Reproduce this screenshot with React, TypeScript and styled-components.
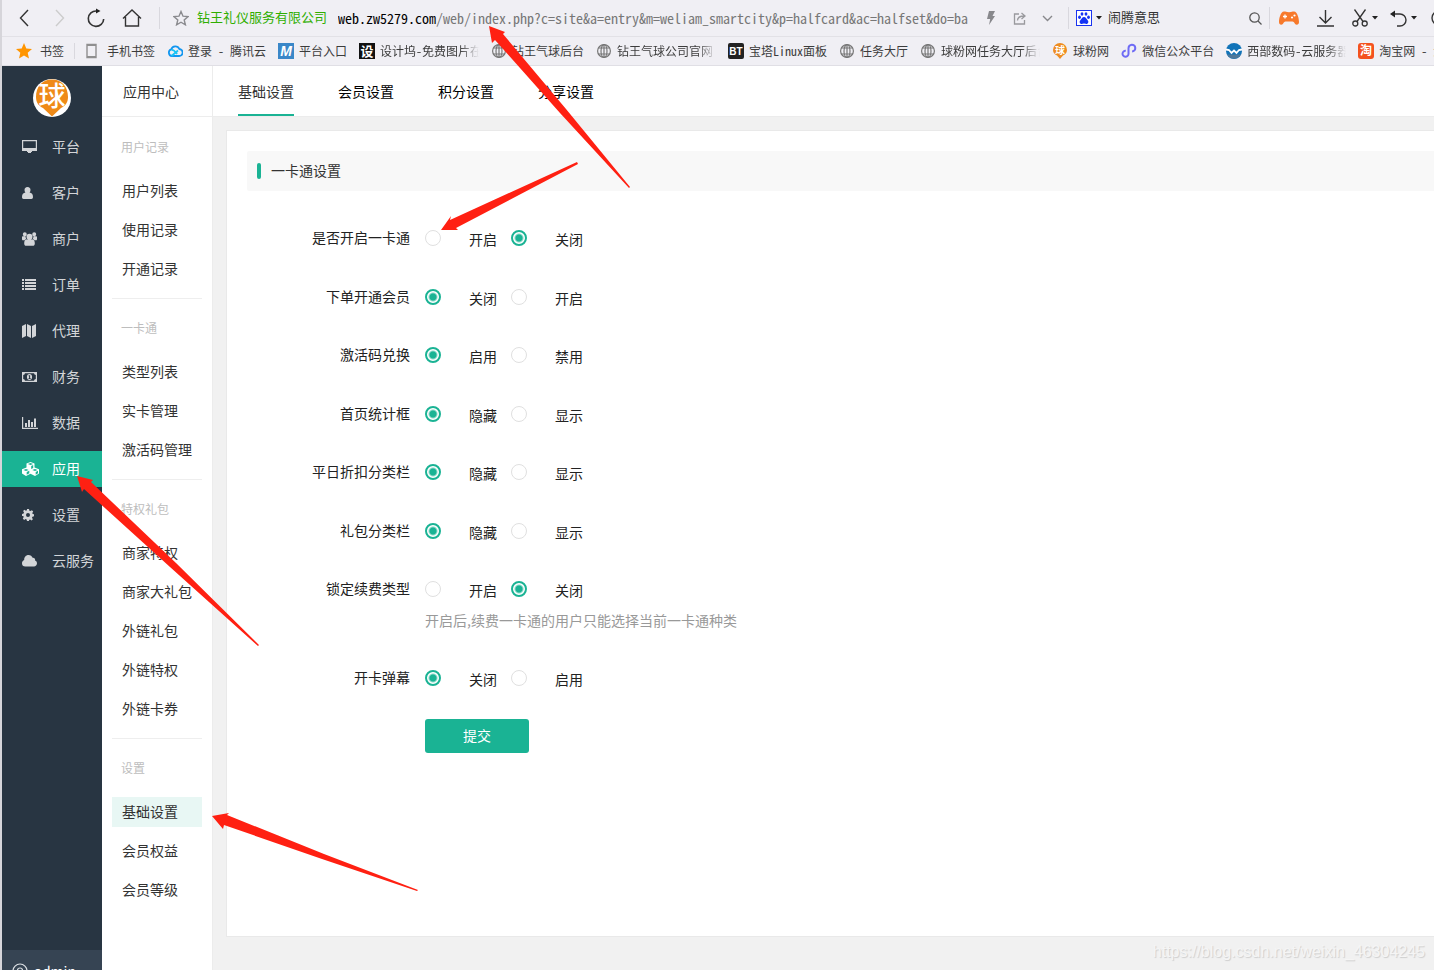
import React from "react";
import styled, { createGlobalStyle, css } from "styled-components";

const green = "#1ab394";
const cjk = '"Noto Sans CJK SC", "Liberation Sans", sans-serif';

const GlobalStyle = createGlobalStyle`
  * { box-sizing: border-box; }
  body { margin: 0; font-family: ${cjk}; font-size: 14px; line-height: 20px; color: #333; }
  button, input { font-family: inherit; font-size: inherit; }
  button { border: 0; padding: 0; background: none; cursor: pointer; color: inherit; }
  a { color: inherit; text-decoration: none; }
  svg { display: block; flex: none; }
  p, h1, h2, h3, ul { margin: 0; padding: 0; font-weight: 400; font-size: inherit; }
  ul { list-style: none; }
`;

const Page = styled.div`
  position: relative;
  display: flex;
  flex-direction: column;
  height: 100vh;
  overflow: hidden;
  border-left: 2px solid #d6d5da;
  background: #f1f1f1;
`;

/* ---------- browser chrome ---------- */

const Chrome = styled.header`
  flex: none;
  background: #f0eff4;
  white-space: nowrap;
  font-feature-settings: "hwid";
`;

const Toolbar = styled.div`
  display: flex;
  align-items: center;
  height: 37px;
  padding-left: 4px;
  border-bottom: 1px solid #e2e1e6;
  overflow: hidden;
`;

const ToolButton = styled.button<{ $w: number; $ml?: number }>`
  display: flex;
  flex: none;
  align-items: center;
  justify-content: center;
  gap: 4px;
  width: ${(p) => p.$w}px;
  height: 34px;
  margin-left: ${(p) => p.$ml ?? 0}px;
`;

const Separator = styled.i<{ $ml: number; $h?: number }>`
  flex: none;
  width: 1px;
  height: ${(p) => p.$h ?? 22}px;
  margin-left: ${(p) => p.$ml}px;
  background: #d9d8de;
`;

const SiteName = styled.span`
  margin: 0 11px 2px 7px;
  font-size: 13px;
  color: #2fae00;
`;

const Address = styled.div`
  flex: 1;
  min-width: 0;
  overflow: hidden;
  font-size: 14px;
  color: #777;
  b { font-weight: 400; color: #000; }
`;

const SearchInput = styled.input`
  flex: none;
  width: 134px;
  height: 24px;
  margin-left: 6px;
  padding: 0 0 3px;
  border: 0;
  outline: 0;
  background: transparent;
  font-size: 13px;
  color: #333;
`;

const Clip = styled.div`
  flex: none;
  width: 3px;
  margin-left: 14px;
  overflow: hidden;
`;

const Bookmarks = styled.nav`
  display: flex;
  align-items: center;
  gap: 12px;
  height: 29px;
  padding-left: 14px;
  border-bottom: 1px solid #e0dfe5;
  overflow: hidden;
  font-size: 12px;
  color: #3c3c3c;
`;

const Bookmark = styled.a<{ $gap?: number }>`
  display: flex;
  flex: none;
  align-items: center;
  gap: ${(p) => p.$gap ?? 5}px;
`;

const BookmarkLead = styled.div`
  display: flex;
  align-items: center;
  gap: 8px;
`;

const BookmarkText = styled.span<{ $cut?: boolean }>`
  ${(p) =>
    p.$cut &&
    css`
      width: 99px;
      overflow: hidden;
      mask-image: linear-gradient(to right, #000 80px, transparent 99px);
    `}
`;

/* ---------- application ---------- */

const Shell = styled.div`
  display: flex;
  flex: 1;
  min-height: 0;
`;

const Sidebar = styled.aside`
  display: flex;
  flex: none;
  flex-direction: column;
  width: 100px;
  background: #283542;
  color: #d3d5d8;
`;

const LogoBox = styled.div`
  display: flex;
  justify-content: center;
  padding: 13px 0 12px;
`;

const SideList = styled.ul`
  display: flex;
  flex: 1;
  flex-direction: column;
  gap: 10px;
`;

const SideLink = styled.a<{ $active?: boolean }>`
  display: flex;
  align-items: center;
  gap: 12px;
  height: 36px;
  padding-left: 20px;
  line-height: 34px;
  white-space: nowrap;
  span { height: 36px; }
  ${(p) => p.$active && css`background: ${green}; color: #fff;`}
`;

const UserBar = styled.div`
  display: flex;
  flex: none;
  gap: 6px;
  height: 20px;
  padding: 13px 0 0 10px;
  overflow: hidden;
  background: #364453;
  color: #fff;
  line-height: 16px;
`;

const SubNav = styled.nav`
  flex: none;
  width: 111px;
  border-right: 1px solid #ececec;
  background: #fff;
`;

const SubHead = styled.h1`
  height: 51px;
  margin-bottom: 1px;
  padding-left: 21px;
  border-bottom: 1px solid #ededed;
  line-height: 50px;
`;

const Section = styled.section`
  margin: 0 10px;
  padding: 20px 0 5px;
  border-bottom: 1px solid #eee;
  &:last-child { border-bottom: 0; }
`;

const SectionTitle = styled.h2`
  margin-bottom: 20px;
  padding-left: 9px;
  font-size: 12px;
  line-height: 18px;
  color: #bdbdbd;
`;

const SubLink = styled.a<{ $active?: boolean }>`
  display: block;
  height: 30px;
  margin-bottom: 9px;
  padding-left: 10px;
  line-height: 28px;
  white-space: nowrap;
  ${(p) => p.$active && css`background: #e8f7f4;`}
`;

const Main = styled.main`
  display: flex;
  flex: 1;
  flex-direction: column;
  min-width: 0;
`;

const Tabs = styled.nav`
  display: flex;
  flex: none;
  gap: 44px;
  height: 51px;
  padding-left: 25px;
  border-bottom: 1px solid #ececec;
  background: #fff;
`;

const Tab = styled.a<{ $active?: boolean }>`
  height: 50px;
  border-bottom: 2px solid ${(p) => (p.$active ? green : "transparent")};
  line-height: 50px;
  color: ${(p) => (p.$active ? "#333" : "#000")};
`;

const Card = styled.div`
  flex: 1;
  margin: 13px 0 33px 13px;
  padding: 20px 0 0 20px;
  border: 1px solid #e9e9e9;
  border-right: 0;
  background: #fff;
`;

const CardHead = styled.h2`
  display: flex;
  align-items: center;
  gap: 10px;
  height: 40px;
  padding-left: 10px;
  border-radius: 2px 0 0 2px;
  background: #f8f8f8;
  line-height: 38px;
  span { height: 40px; }
  &::before {
    content: "";
    width: 4px;
    height: 16px;
    border-radius: 2px;
    background: ${green};
  }
`;

const Form = styled.form`
  padding-top: 30px;
  color: #222;
`;

const Row = styled.fieldset`
  display: grid;
  grid-template-columns: 163px 1fr;
  column-gap: 15px;
  min-width: 0;
  margin: 0 0 24px;
  padding: 0;
  border: 0;
  &:nth-child(odd) { margin-bottom: 25px; }
`;

const RowLabel = styled.span`
  line-height: 32px;
  text-align: right;
`;

const Options = styled.div`
  display: flex;
  gap: 14px;
`;

const Option = styled.label`
  display: flex;
  align-items: center;
  gap: 28px;
  height: 34px;
  span { padding-top: 1px; }
`;

const Radio = styled.input`
  appearance: none;
  width: 16px;
  height: 16px;
  margin: 0;
  border: 1px solid #e0e0e0;
  border-radius: 50%;
  background: #fff;
  &:checked {
    border: 2px solid ${green};
    background: radial-gradient(circle, ${green} 3px, #fff 5px);
  }
`;

const Help = styled.p`
  grid-column: 2;
  margin: 4px 0 6px;
  color: #999;
`;

const Submit = styled.button`
  width: 104px;
  height: 34px;
  margin-left: 178px;
  padding-bottom: 2px;
  border-radius: 3px;
  background: ${green};
  color: #fff;
`;

/* ---------- layers over the page ---------- */

const Arrows = styled.svg`
  position: absolute;
  top: 0;
  left: -2px;
  pointer-events: none;
`;

const Watermark = styled.p`
  position: absolute;
  right: 9px;
  bottom: 8px;
  font-family: "Liberation Sans", sans-serif;
  font-size: 16px;
  color: #f5f5f5;
  text-shadow: 1px 1px 1px #cdcdcd;
`;

/* ---------- drawings ---------- */

const Line = ({ w, h, c = "#333", sw = 1.4, children }: {
  w: number; h: number; c?: string; sw?: number; children: React.ReactNode;
}) => (
  <svg width={w} height={h} viewBox={`0 0 ${w} ${h}`} fill="none" stroke={c} strokeWidth={sw}>
    {children}
  </svg>
);

const Fill = ({ w, h, c = "currentColor", children }: {
  w: number; h: number; c?: string; children: React.ReactNode;
}) => (
  <svg width={w} height={h} viewBox={`0 0 ${w} ${h}`} fill={c}>{children}</svg>
);

const Caret = () => (
  <Fill w={6} h={4} c="#222"><path d="M0 0h6L3 3.5z" /></Fill>
);

const Globe = () => (
  <Line w={16} h={16} c="#777" sw={1.2}>
    <circle cx="8" cy="8" r="6.4" />
    <ellipse cx="8" cy="8" rx="3" ry="6.4" />
    <path d="M8 1.5v13M2.4 5h11.2M2.4 11h11.2" />
  </Line>
);

const TileText = styled.text`
  font-family: "Liberation Sans", "Noto Sans CJK SC", sans-serif;
  font-weight: 700;
  font-feature-settings: normal;
`;

const Tile = ({ bg, text, size, italic, r = 0 }: {
  bg: string; text: string; size: number; italic?: boolean; r?: number;
}) => (
  <svg width="16" height="16" viewBox="0 0 16 16" aria-hidden="true">
    <rect width="16" height="16" rx={r} fill={bg} />
    <TileText x="8" y={8 + size * 0.37} textAnchor="middle" fill="#fff" fontSize={size}
      fontStyle={italic ? "italic" : "normal"}>{text}</TileText>
  </svg>
);

const BallPin = () => (
  <svg width="16" height="16" viewBox="0 0 16 16" aria-hidden="true">
    <path d="M8 0a7 7 0 0 1 7 7c0 3-2 4.500-4 5.500L8 16l-3-3.500C3 11.500 1 10 1 7a7 7 0 0 1 7-7z" fill="#ee8d22" />
    <TileText x="8" y="11" textAnchor="middle" fill="#fff" fontSize="10">球</TileText>
  </svg>
);

const Logo = () => (
  <svg width="38" height="38" viewBox="0 0 38 38" role="img" aria-label="球">
    <circle cx="19" cy="19" r="19" fill="#fff" />
    <path d="M3 18C3 8 9 0.500 19 0.500S35 8 35 18c0 6-3 9-7 11l-9 8.500L10 29C6 27 3 24 3 18z" fill="#ef8a17" />
    <text x="19" y="27" textAnchor="middle" fill="#fff" fontSize="27" fontWeight="500" fontFamily={cjk}>球</text>
  </svg>
);

const sideIcons: Record<string, React.ReactNode> = {
  monitor: <path d="M0 1h15v11h-5v1h-1v1H6v-1H5v-1H0zM1.200 2.200V9h12.600V2.200z" fillRule="evenodd" />,
  user: <path d="M5.500 2C7.500 2 8.500 3.400 8.500 5c0 1-.4 2-.9 2.600 2 .3 3.400 1.600 3.400 4.400 0 1.200-.6 2-1.600 2H1.600C.6 14 0 13.200 0 12c0-2.800 1.400-4.100 3.400-4.400C2.900 7 2.500 6 2.500 5c0-1.600 1-3 3-3z" />,
  users: (
    <path d="M2.800 1.300a2 2 0 1 1 0 4 2 2 0 0 1 0-4zm9.400 0a2 2 0 1 1 0 4 2 2 0 0 1 0-4zM7.500 2.800a3 3 0 1 1 0 6 3 3 0 0 1 0-6zM0 8V6.300C0 5.600.5 5.300 1 5.300h2.600c0 1.500.3 2.300 1 3H4c-.8 0-1 .5-1.500 1H1C.4 9.300 0 8.800 0 8zm15 0V6.300c0-.7-.5-1-1-1h-2.600c0 1.500-.3 2.300-1 3h.6c.8 0 1 .5 1.500 1H14c.6 0 1-.5 1-1.300zM4.500 8.600h6c1.500 0 2.300 1.600 2.300 3.800 0 1.500-.8 2.300-2 2.300H4.200c-1.200 0-2-.8-2-2.300 0-2.200.8-3.800 2.300-3.800z" />
  ),
  list: <path d="M0 2h2v2H0zm3 0h11v2H3zM0 5h2v2H0zm3 0h11v2H3zM0 8h2v2H0zm3 0h11v2H3zM0 11h2v2H0zm3 0h11v2H3z" />,
  map: <path d="M0 3l4-2v12l-4 2zM5 1l4 2v12l-4-2zM10 3l4-2v12l-4 2z" />,
  money: (
    <path fillRule="evenodd" d="M0 3h15v10H0zm3 1.200A2 2 0 0 1 1.200 6v4A2 2 0 0 1 3 11.800h9A2 2 0 0 1 13.800 10V6A2 2 0 0 1 12 4.200zM7.500 5c1.600 0 2.600 1.300 2.600 3s-1 3-2.600 3-2.600-1.300-2.600-3 1-3 2.600-3zm-.8 1.300v.9h.4v1.900h-.5v.8h2v-.8h-.5V6.300z" />
  ),
  chart: <path d="M0 2h1.200v10.800H16V14H0zM3 8h2v4H3zm3-3h2v7H6zm3 2h2v5H9zm3-3.500h2V12h-2z" />,
  cubes: (
    <path fillRule="evenodd" d="M8.500 1l4 1.500v4L17 8.300v4.200L13 15l-4.500-2.200L4 15l-4-2.500V8.300l4.500-1.800v-4zM5.800 2.900l2.700 1 2.700-1-2.700-.9zm3.400 2v3l2-.9V4zM1.400 8.900l2.600 1 2.700-1-2.700-.9zm3.300 2v2.800l2.600-1.500V9.800zm5.600-2l2.700 1 2.600-1-2.600-.9zm3.400 2v2.800l2.300-1.500V9.800z" />
  ),
  gear: (
    <path fillRule="evenodd" d="M5 2h2l.4 1.700 1 .4 1.500-.9 1.300 1.300-.9 1.500.4 1L12 7.300v2l-1.600.4-.4 1 .9 1.500-1.300 1.300-1.500-.9-1 .4L7 14H5l-.4-1.600-1-.4-1.500.9L.8 11.600l.9-1.500-.4-1L0 9V7l1.600-.4.4-1-.9-1.500 1.300-1.300 1.500.9 1-.4zm1 4a2 2 0 1 0 0 4 2 2 0 0 0 0-4z" />
  ),
  cloud: <path d="M3.500 13.500A3.400 3.400 0 0 1 0 10.200C0 8.600 1 7.500 2.200 7 2 4.300 4 2 6.500 2c2 0 3.500 1.200 4.100 2.800 1.700-.2 2.800 1 2.500 2.600 1.200.4 1.900 1.500 1.900 2.900 0 1.900-1.400 3.200-3 3.200z" />,
};

/* ---------- data ---------- */

const sideItems: [string, string][] = [
  ["monitor", "平台"], ["user", "客户"], ["users", "商户"], ["list", "订单"], ["map", "代理"],
  ["money", "财务"], ["chart", "数据"], ["cubes", "应用"], ["gear", "设置"], ["cloud", "云服务"],
];

const sections: [string, string[]][] = [
  ["用户记录", ["用户列表", "使用记录", "开通记录"]],
  ["一卡通", ["类型列表", "实卡管理", "激活码管理"]],
  ["特权礼包", ["商家特权", "商家大礼包", "外链礼包", "外链特权", "外链卡券"]],
  ["设置", ["基础设置", "会员权益", "会员等级"]],
];

const tabs = ["基础设置", "会员设置", "积分设置", "分享设置"];

const rows: { label: string; options: [string, string]; on: number; help?: string }[] = [
  { label: "是否开启一卡通", options: ["开启", "关闭"], on: 1 },
  { label: "下单开通会员", options: ["关闭", "开启"], on: 0 },
  { label: "激活码兑换", options: ["启用", "禁用"], on: 0 },
  { label: "首页统计框", options: ["隐藏", "显示"], on: 0 },
  { label: "平日折扣分类栏", options: ["隐藏", "显示"], on: 0 },
  { label: "礼包分类栏", options: ["隐藏", "显示"], on: 0 },
  { label: "锁定续费类型", options: ["开启", "关闭"], on: 1, help: "开启后,续费一卡通的用户只能选择当前一卡通种类" },
  { label: "开卡弹幕", options: ["关闭", "启用"], on: 0 },
];

const bookmarks: { icon: React.ReactNode; text: string; cut?: boolean }[] = [
  {
    icon: (
      <Line w={16} h={16} c="#1296f0" sw={1.8}>
        <path d="M5 13a3.400 3.400 0 0 1-.8-6.600A4.300 4.300 0 0 1 12.300 6a3.500 3.500 0 0 1-.3 7H4.500" />
        <path d="M4.500 13l6.500-5.500" stroke="#19c4f5" />
        <path d="M4.500 7c2.500-.5 4 2 5.500 4" stroke="#19c4f5" />
      </Line>
    ),
    text: "登录 - 腾讯云",
  },
  { icon: <Tile bg="#3a87c8" text="M" size={14} italic />, text: "平台入口" },
  { icon: <Tile bg="#111" text="设" size={13} />, text: "设计坞-免费图片在线设计", cut: true },
  { icon: <Globe />, text: "钻王气球后台" },
  { icon: <Globe />, text: "钻王气球公司官网", cut: true },
  { icon: <Tile bg="#222" text="BT" size={10} r={2} />, text: "宝塔Linux面板" },
  { icon: <Globe />, text: "任务大厅" },
  { icon: <Globe />, text: "球粉网任务大厅后台", cut: true },
  { icon: <BallPin />, text: "球粉网" },
  {
    icon: (
      <Line w={16} h={16} c="#6f6cf5" sw={2}>
        <path d="M4.800 7.800A3 3 0 1 0 7.500 11V5.200a3.400 3.400 0 1 1 3.600 3.300" />
      </Line>
    ),
    text: "微信公众平台",
  },
  {
    icon: (
      <svg width="16" height="16" viewBox="0 0 16 16">
        <circle cx="8" cy="8" r="8" fill="#1173b8" />
        <path d="M1 11.500h14A8 8 0 0 1 1 11.500z" fill="#4f7899" />
        <path d="M0 6.500l3 .5 2.500 3L8 7.500l2.500 2.500L13 7l3-.5" fill="none" stroke="#fff" strokeWidth="1.800" />
      </svg>
    ),
    text: "西部数码-云服务器",
    cut: true,
  },
  { icon: <Tile bg="#f4511e" text="淘" size={12} r={3} />, text: "淘宝网 - 淘！我喜欢" },
];

const arrows = [
  "489,26 505,32 503,34 566,109 630,187 629,188 560,113 495,40 492,43",
  "441,230 451,216 450,220 577,162 578,164 456,228 458,230",
  "77,476 93,480 91,482 176,563 259,645 258,646 170,567 84,489 82,492",
  "212,816 229,813 227,815 324,854 418,890 417,891 322,859 224,825 223,829",
];

function BrowserChrome() {
  return (
    <Chrome>
      <Toolbar>
        <ToolButton $w={36} aria-label="后退"><Line w={10} h={18}><path d="M9 1L1.500 9 9 17" /></Line></ToolButton>
        <ToolButton $w={36} aria-label="前进"><Line w={10} h={18} c="#ccc"><path d="M1 1l7.500 8L1 17" /></Line></ToolButton>
        <ToolButton $w={36} aria-label="刷新">
          <Line w={18} h={20} sw={1.6}><path d="M9.500 3A7.700 7.700 0 1 0 16.700 11" /><path d="M9 .5l4.500 2.500L9 5.500z" fill="#222" stroke="none" /></Line>
        </ToolButton>
        <ToolButton $w={36} aria-label="主页"><Line w={20} h={18}><path d="M1 9.500L10 1l9 8.500M3.500 8v9h13V8" /></Line></ToolButton>
        <Separator $ml={9} />
        <ToolButton $w={18} $ml={12} aria-label="收藏">
          <Line w={16} h={16} c="#8a8a8e"><path d="M8 1.500l2 4.700 5 .4-3.800 3.300 1.200 4.900L8 12.200l-4.400 2.600 1.200-4.900L1 6.600l5-.4z" /></Line>
        </ToolButton>
        <SiteName>钻王礼仪服务有限公司</SiteName>
        <Address>
          <b>web.zw5279.com</b>/web/index.php?c=site&amp;a=entry&amp;m=weliam_smartcity&amp;p=halfcard&amp;ac=halfset&amp;do=ba
        </Address>
        <ToolButton $w={28} aria-label="加速"><Fill w={8} h={14} c="#88888c"><path d="M2 0h6L5.500 5H8L2 14l1.200-6H0z" /></Fill></ToolButton>
        <ToolButton $w={28} aria-label="分享">
          <Line w={13} h={13} c="#99999d" sw={1.3}><path d="M6 2H1.500v10h10V8M4.500 8.500c0-3 2-4.500 7-4.500M8.500 1L12 4 8.500 7" /></Line>
        </ToolButton>
        <ToolButton $w={28} aria-label="更多"><Line w={11} h={7} c="#88888c"><path d="M1 1l4.500 4.500L10 1" /></Line></ToolButton>
        <Separator $ml={7} />
        <ToolButton $w={26} $ml={7} aria-label="搜索引擎">
          <svg width="16" height="16" viewBox="0 0 16 16">
            <rect x=".5" y=".5" width="15" height="15" fill="#fff" stroke="#1a33f0" />
            <g fill="#1433f5">
              <ellipse cx="3.500" cy="7.200" rx="1.400" ry="1.800" /><ellipse cx="6" cy="4" rx="1.400" ry="1.800" />
              <ellipse cx="10" cy="4" rx="1.400" ry="1.800" /><ellipse cx="12.500" cy="7.200" rx="1.400" ry="1.800" />
              <path d="M8 7c1.800 0 2.300 1.800 3.500 2.900 1.600 1.600.8 4-1.300 4-1 0-1.400-.3-2.200-.3s-1.200.3-2.200.3c-2.100 0-2.900-2.400-1.300-4C5.700 8.800 6.200 7 8 7z" />
            </g>
          </svg>
          <Caret />
        </ToolButton>
        <SearchInput aria-label="搜索" defaultValue="闹腾意思" />
        <ToolButton $w={27} aria-label="搜索"><Line w={13} h={13} c="#555" sw={1.3}><circle cx="5.500" cy="5.500" r="4.700" /><path d="M9 9l3.500 3.500" /></Line></ToolButton>
        <Separator $ml={0} />
        <ToolButton $w={38} aria-label="游戏">
          <svg width="20" height="14" viewBox="0 0 20 14">
            <path d="M5 .5c2 0 2 .7 5 .7s3-.7 5-.7C18.500.5 20 8 20 11c0 2-1 2.700-2.200 2.700-2.300 0-2.300-3.200-4.300-3.200h-7c-2 0-2 3.200-4.300 3.200C1 13.700 0 13 0 11 0 8 1.500.5 5 .5z" fill="#f7792b" />
            <path d="M4 5.500h4M6 3.500v4" stroke="#fff" strokeWidth="1.300" />
            <g fill="#fff"><circle cx="13" cy="6.500" r="1.100" /><circle cx="15.500" cy="4.500" r="1.100" /></g>
          </svg>
        </ToolButton>
        <ToolButton $w={35} aria-label="下载"><Line w={17} h={17}><path d="M8.500 0v12.500M2.500 7l6 6 6-6M0 16h17" /></Line></ToolButton>
        <ToolButton $w={28} $ml={8} aria-label="截图">
          <Line w={16} h={18} sw={1.3}>
            <path d="M2.500.5L11 12.500M13.500.5L5 12.500" /><circle cx="3.300" cy="14.500" r="2.500" /><circle cx="12.700" cy="14.500" r="2.500" />
          </Line>
          <Caret />
        </ToolButton>
        <ToolButton $w={28} $ml={10} aria-label="恢复">
          <Line w={17} h={17}><path d="M2 4h8a6 6 0 0 1 0 12H7" /><path d="M0 4l5-3.500v7z" fill="#222" stroke="none" /></Line>
          <Caret />
        </ToolButton>
        <Clip><Line w={16} h={16}><circle cx="8" cy="8" r="7" /></Line></Clip>
      </Toolbar>
      <Bookmarks>
        <BookmarkLead>
          <Bookmark href="#" $gap={8}>
            <Fill w={16} h={16} c="#ff9500"><path d="M8 0l2.300 5.400 5.700.5-4.300 3.800 1.300 5.800L8 12.400l-5 3.100 1.300-5.800L0 5.900l5.700-.5z" /></Fill>
            书签
          </Bookmark>
          <Separator $ml={2} $h={16} />
          <Bookmark href="#" $gap={8}>
            <Line w={16} h={16} c="#8f8f8f" sw={1.4}><path d="M4 1.500h9v13H4zM4 2.200h9M4 13.600h9" /></Line>
            手机书签
          </Bookmark>
        </BookmarkLead>
        {bookmarks.map((b) => (
          <Bookmark href="#" key={b.text}>
            {b.icon}
            <BookmarkText $cut={b.cut}>{b.text}</BookmarkText>
          </Bookmark>
        ))}
      </Bookmarks>
    </Chrome>
  );
}

export default function App() {
  return (
    <Page>
      <GlobalStyle />
      <BrowserChrome />
      <Shell>
        <Sidebar>
          <LogoBox><Logo /></LogoBox>
          <SideList>
            {sideItems.map(([icon, text]) => (
              <li key={text}>
                <SideLink href="#" $active={text === "应用"}>
                  <Fill w={18} h={16}>{sideIcons[icon]}</Fill>
                  <span>{text}</span>
                </SideLink>
              </li>
            ))}
          </SideList>
          <UserBar>
            <Line w={16} h={16} c="#dde1e5" sw={1.2}><circle cx="8" cy="8" r="7" /><circle cx="8" cy="7.500" r="2.500" /></Line>
            admin
          </UserBar>
        </Sidebar>
        <SubNav>
          <SubHead>应用中心</SubHead>
          {sections.map(([title, items]) => (
            <Section key={title}>
              <SectionTitle>{title}</SectionTitle>
              {items.map((item) => (
                <SubLink href="#" key={item} $active={item === "基础设置"}>{item}</SubLink>
              ))}
            </Section>
          ))}
        </SubNav>
        <Main>
          <Tabs>
            {tabs.map((t, i) => <Tab href="#" key={t} $active={i === 0}>{t}</Tab>)}
          </Tabs>
          <Card>
            <CardHead><span>一卡通设置</span></CardHead>
            <Form onSubmit={(e) => e.preventDefault()}>
              {rows.map((row, r) => (
                <Row key={row.label} aria-labelledby={`row-${r}`}>
                  <RowLabel id={`row-${r}`}>{row.label}</RowLabel>
                  <Options>
                    {row.options.map((o, i) => (
                      <Option key={o}>
                        <Radio type="radio" name={`row-${r}`} defaultChecked={i === row.on} />
                        <span>{o}</span>
                      </Option>
                    ))}
                  </Options>
                  {row.help && <Help>{row.help}</Help>}
                </Row>
              ))}
              <Submit type="submit">提交</Submit>
            </Form>
          </Card>
        </Main>
      </Shell>
      <Arrows width="640" height="900" viewBox="0 0 640 900" fill="#ff2012" aria-hidden="true">
        {arrows.map((points) => <polygon key={points} points={points} />)}
      </Arrows>
      <Watermark>https://blog.csdn.net/weixin_46304245</Watermark>
    </Page>
  );
}
